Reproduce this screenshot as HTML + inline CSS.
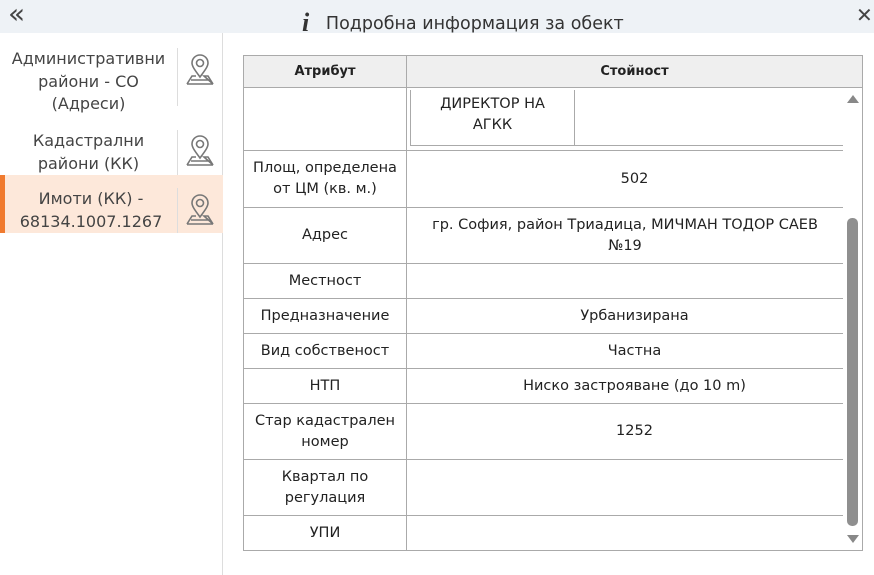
<!DOCTYPE html>
<html><head><meta charset="utf-8"><style>
*{box-sizing:border-box;margin:0;padding:0}
body{width:874px;height:575px;overflow:hidden;background:#fff;font-family:"DejaVu Sans","Liberation Sans",sans-serif;font-size:14.5px;color:#222;position:relative}
.hdr{position:absolute;left:0;top:0;width:874px;height:33px;background:#eef2f6}
.hdr .t{position:absolute;left:302px;top:6px;font-size:17.5px;color:#333;white-space:nowrap}
.left{position:absolute;left:0;top:33px;width:223px;height:542px;border-right:1px solid #ddd}
.item{position:absolute;left:0;width:223px;text-align:center;color:#444;font-size:16px;line-height:22.5px}
.item .tx{position:absolute;left:0;width:178px;border-right:1px solid #ddd}
.pin{position:absolute;left:184px}
.sel{background:#fde8da;border-left:5px solid #f07a2e}
table{position:absolute;left:243px;top:55px;width:620px;border-collapse:collapse;border:1px solid #aaa}
td,th{border-bottom:1px solid #aaa;text-align:center;vertical-align:middle;line-height:21px;font-weight:normal}
th{background:#efefef;height:32px;font-weight:bold;font-size:13px;border-right:1px solid #aaa}
td.a{width:163px;border-right:1px solid #aaa}
.sb{position:absolute;left:843px;top:88px;width:19px;height:462px;background:#fff}
</style></head><body>
<div class="hdr">
<div style="position:absolute;left:8px;top:-3px;font-size:28px;color:#444">«</div>
<div class="t"><span style="font-family:'Liberation Serif',serif;font-weight:bold;font-style:italic;font-size:26px;color:#333;position:relative;top:2px">i</span>&nbsp;&nbsp;&nbsp;Подробна информация за обект</div>
<div style="position:absolute;left:856px;top:3px;font-size:20px;font-weight:bold;color:#444">✕</div>
</div>
<div class="left">
<div class="item" style="top:15px;height:68px"><div class="tx" style="height:58px;top:0">Административни<br>райони - СО<br>(Адреси)</div></div>
<div class="item" style="top:97px;height:44px"><div class="tx" style="top:0">Кадастрални<br>райони (КК)</div></div>
<div class="item sel" style="top:142px;height:58px;padding-top:7px"><div class="tx" style="top:13px;width:173px">Имоти (КК) -<br>68134.1007.1267</div></div>
<svg class="pin" style="top:20px" width="32" height="34" viewBox="0 0 32 34" fill="none" stroke="#777" stroke-width="1.6"><path d="M16 24C10 16 8 13 8 10a8 8 0 0116 0c0 3-2 6-8 14z"/><circle cx="16" cy="10" r="3.5"/><path d="M3 31l5-8h4M20 23h4l5 8zM3 31h26M7 27h18"/></svg>
<svg class="pin" style="top:101px" width="32" height="34" viewBox="0 0 32 34" fill="none" stroke="#777" stroke-width="1.6"><path d="M16 24C10 16 8 13 8 10a8 8 0 0116 0c0 3-2 6-8 14z"/><circle cx="16" cy="10" r="3.5"/><path d="M3 31l5-8h4M20 23h4l5 8zM3 31h26M7 27h18"/></svg>
<svg class="pin" style="top:160px" width="32" height="34" viewBox="0 0 32 34" fill="none" stroke="#777" stroke-width="1.6"><path d="M16 24C10 16 8 13 8 10a8 8 0 0116 0c0 3-2 6-8 14z"/><circle cx="16" cy="10" r="3.5"/><path d="M3 31l5-8h4M20 23h4l5 8zM3 31h26M7 27h18"/></svg>
</div>
<table>
<tr><th>Атрибут</th><th style="border-right:none">Стойност</th></tr>
<tr style="height:63px"><td class="a"></td><td style="text-align:left;vertical-align:top;padding:2px 19px 0 3px"><div style="border-bottom:1px solid #aaa;height:56px;display:flex"><div style="width:165px;border-right:1px solid #aaa;border-left:1px solid #aaa;text-align:center;padding-top:4px">ДИРЕКТОР НА<br>АГКК</div></div></td></tr>
<tr style="height:57px"><td class="a">Площ, определена<br>от ЦМ (кв. м.)</td><td>502</td></tr>
<tr style="height:56px"><td class="a">Адрес</td><td style="padding-right:19px">гр. София, район Триадица, МИЧМАН ТОДОР САЕВ<br>№19</td></tr>
<tr style="height:35px"><td class="a">Местност</td><td></td></tr>
<tr style="height:35px"><td class="a">Предназначение</td><td>Урбанизирана</td></tr>
<tr style="height:35px"><td class="a">Вид собственост</td><td>Частна</td></tr>
<tr style="height:35px"><td class="a">НТП</td><td>Ниско застрояване (до 10 m)</td></tr>
<tr style="height:56px"><td class="a">Стар кадастрален<br>номер</td><td>1252</td></tr>
<tr style="height:56px"><td class="a">Квартал по<br>регулация</td><td></td></tr>
<tr style="height:35px"><td class="a" style="border-bottom:none">УПИ</td><td style="border-bottom:none"></td></tr>
</table>
<div class="sb">
<div style="position:absolute;left:4px;top:7px;width:0;height:0;border-left:6px solid transparent;border-right:6px solid transparent;border-bottom:8px solid #888"></div>
<div style="position:absolute;left:4px;top:130px;width:11px;height:308px;background:#8f8f8f;border-radius:5px"></div>
<div style="position:absolute;left:4px;top:447px;width:0;height:0;border-left:6px solid transparent;border-right:6px solid transparent;border-top:8px solid #888"></div>
</div>
</body></html>
